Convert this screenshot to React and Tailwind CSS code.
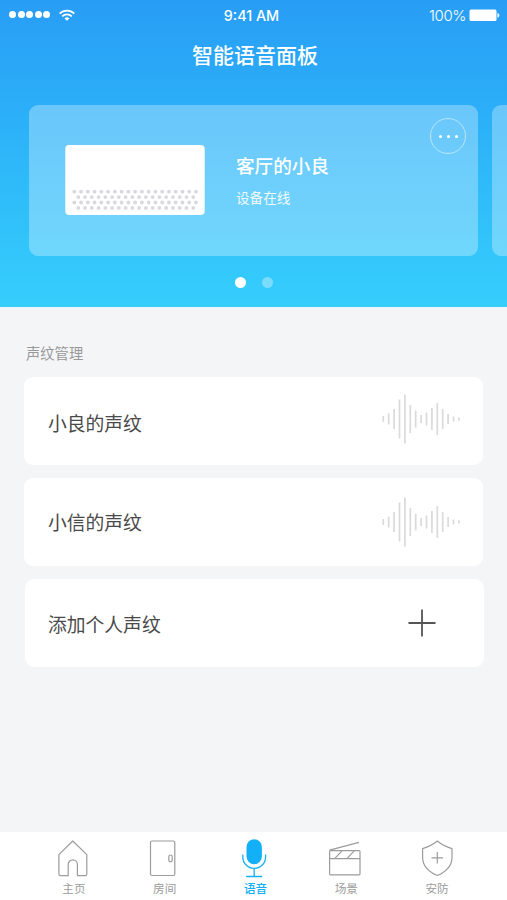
const voiceprints = [
  { name: "小良的声纹", textPad: "pt-[5px]", wavePad: "pb-[4px]" },
  { name: "小信的声纹", textPad: "pt-0", wavePad: "pb-px" },
];

// bar heights of the sound wave, left to right
const bars = [6, 11, 20, 39, 49, 28, 17, 8, 13, 22, 32, 20, 10, 5, 3];

const tabs = [
  { label: "主页", icon: HomeIcon },
  { label: "房间", icon: DoorIcon },
  { label: "语音", icon: MicIcon, active: true },
  { label: "场景", icon: SceneIcon },
  { label: "安防", icon: ShieldIcon },
];

function HomeIcon() {
  return (
    <svg width="36" height="40" viewBox="0 0 36 40" fill="none" stroke="currentColor" strokeWidth="1.2" strokeLinejoin="round">
      <path d="M17.8 3L3.9 16.6v19.6c0 .9.5 1.4 1.4 1.4h7.9V26.5a4.6 4.6 0 0 1 9.2 0v11.1h8c.9 0 1.4-.5 1.4-1.4V16.6z" />
    </svg>
  );
}

function DoorIcon() {
  return (
    <svg width="36" height="40" viewBox="0 0 36 40" fill="none" stroke="currentColor" strokeWidth="1.2">
      <rect x="4.5" y="3" width="24.3" height="34.5" rx="1.5" />
      <rect x="22.8" y="17" width="3.4" height="6.8" rx="1.7" />
    </svg>
  );
}

function MicIcon() {
  return (
    <svg width="36" height="40" viewBox="0 0 36 40" fill="none" stroke="currentColor" strokeWidth="1.3">
      <rect x="9.5" y="1.3" width="15.4" height="25" rx="7.7" fill="currentColor" stroke="none" />
      <path d="M5.8 16.5v2.5a11.4 11.4 0 0 0 22.8 0v-2.5M17.2 30.5v7.8M9.2 38.5h16" />
    </svg>
  );
}

function SceneIcon() {
  return (
    <svg width="36" height="40" viewBox="0 0 36 40" fill="none" stroke="currentColor" strokeWidth="1.2" strokeLinejoin="round">
      <rect x="1.6" y="12.6" width="30.4" height="24.2" rx="1" />
      <path d="M1.6 20.7H32M1.6 12.2L31 4.4M6.6 20.6l7.4-7.8M18.8 20.6l7.4-7.8" />
    </svg>
  );
}

function ShieldIcon() {
  return (
    <svg width="36" height="40" viewBox="0 0 36 40" fill="none" stroke="currentColor" strokeWidth="1.2" strokeLinejoin="round">
      <path d="M18.3 3C14 6.6 9 9 3.6 10.6v8.8c0 8 6.4 14.4 14.7 18.1C26.600 33.800 33 27.400 33 19.400v-8.800C27.600 9 22.600 6.600 18.300 3z" />
      <path d="M18.300 14v11.600M12.500 19.800h11.600" />
    </svg>
  );
}

function Wave() {
  return (
    <svg width="80" height="50" viewBox="0 0 80 50" stroke="#dadada" strokeWidth="1.7">
      {bars.map((h, i) => (
        <path key={i} d={`M${2.3 + i * 5.4} ${25 - h / 2}v${h}`} />
      ))}
    </svg>
  );
}

function Speaker() {
  return (
    <svg width="140" height="70" viewBox="0 0 140 70">
      <rect x="0.3" width="139.4" height="70" rx="4" fill="#fff" />
      {[0, 1, 2, 3].map((row) =>
        Array.from({ length: row % 2 ? 18 : 19 }, (_, i) => (
          <circle
            key={`${row}-${i}`}
            cx={9.3 + (row % 2 ? 4 : 0) + i * 6.76}
            cy={46.7 + row * 5.4}
            r="1.9"
            fill="#d9d8e0"
          />
        ))
      )}
    </svg>
  );
}

function StatusBar() {
  return (
    <div className="grid grid-cols-3 h-8 px-2 font-['Inter','Liberation_Sans',sans-serif] text-[15px]">
      <div className="flex items-center gap-[9px] pb-[3px] pl-px">
        <div className="flex gap-[1.5px]">
          {[0, 1, 2, 3, 4].map((i) => (
            <span key={i} className="size-[7.1px] rounded-full bg-white" />
          ))}
        </div>
        <svg width="16" height="12" viewBox="0 0 16 12" fill="none" stroke="#fff" strokeWidth="1.7">
          <path d="M.7 4.6a10.4 10.4 0 0 1 14.6 0M3.2 7.4a6.8 6.8 0 0 1 9.6 0" />
          <path d="M8 11.8L5.5 9.4a3.6 3.6 0 0 1 5 0z" fill="#fff" stroke="none" />
        </svg>
      </div>
      <div className="flex items-center justify-center pr-1 font-medium text-[14.3px]">9:41 AM</div>
      <div className="flex items-center justify-end gap-[3px] -mr-px">
        <span className="font-light tracking-tight">100%</span>
        <svg width="31" height="14" viewBox="0 0 31 14" fill="#fff" className="mb-[3px]">
          <rect x="0.5" y="1.5" width="27" height="11.5" rx="1.5" />
          <path d="M28.500 5a2.500 2.500 0 0 1 0 4.800z" />
        </svg>
      </div>
    </div>
  );
}

export default function App() {
  return (
    <div className="flex flex-col w-[507px] h-[900px] overflow-hidden bg-[#f3f5f7] font-['Noto_Sans_CJK_SC',sans-serif]">
      <header className="h-[307px] shrink-0 text-white bg-linear-to-b from-[#289df5] to-[#36cefc]">
        <StatusBar />
        <h1 className="h-[73px] pt-[7px] pl-[3px] text-center text-[21px] leading-[30px] font-medium">智能语音面板</h1>

        {/* Device carousel */}
        <div className="flex gap-[14px] ml-[29px] overflow-hidden">
          <div className="flex w-[449px] h-[151px] shrink-0 rounded-[9px] bg-white/30">
            <div className="pl-[36px] pt-[40px]">
              <Speaker />
            </div>
            <div className="flex-1 pl-[31px] pt-[45px]">
              <p className="text-[18.6px] leading-[30px] font-medium">客厅的小良</p>
              <p className="mt-[6px] text-[13.6px] leading-[22px] opacity-90">设备在线</p>
            </div>
            <button className="flex items-center justify-center gap-[5px] size-9 mt-[13px] mr-3 rounded-full border border-white/50">
              <span className="size-[3px] rounded-full bg-white" />
              <span className="size-[3px] rounded-full bg-white" />
              <span className="size-[3px] rounded-full bg-white" />
            </button>
          </div>
          <div className="w-[449px] h-[151px] shrink-0 rounded-[9px] bg-white/30" />
        </div>

        <div className="flex justify-center gap-4 pt-[21px] pl-px">
          <span className="size-[11px] rounded-full bg-white" />
          <span className="size-[11px] rounded-full bg-white/35" />
        </div>
      </header>

      {/* Voiceprints */}
      <main className="flex-1 px-6 pt-[35px] text-[#4a4a4a]">
        <h2 className="pl-[2px] h-[35px] text-[14.3px] leading-[22px] text-[#999]">声纹管理</h2>
        <div className="flex flex-col gap-[13px]">
          {voiceprints.map((v) => (
            <div key={v.name} className="flex items-center justify-between w-[459px] h-[88px] pl-6 pr-[22px] rounded-[9px] bg-white">
              <span className={`text-[18.8px] ${v.textPad}`}>{v.name}</span>
              <span className={v.wavePad}>
                <Wave />
              </span>
            </div>
          ))}
          <div className="flex items-center justify-between w-[459px] h-[88px] ml-px pl-[23px] pr-[48px] -mt-[0.5px] rounded-[9px] bg-white">
            <span className="text-[18.8px] pt-[4px]">添加个人声纹</span>
            <svg width="28" height="28" viewBox="0 0 28 28" stroke="#555" strokeWidth="1.8">
              <path d="M14 .5v27M.5 14h27" />
            </svg>
          </div>
        </div>
      </main>

      <nav className="flex h-[68px] shrink-0 pl-[28px] pr-[25px] pt-[6px] bg-white">
        {tabs.map(({ label, icon: Icon, active }) => (
          <div
            key={label}
            className={`flex flex-col items-center flex-1 text-[11.6px] leading-4 ${active ? "text-[#14b0f7] font-medium" : "text-[#9c9c9c]"}`}
          >
            <Icon />
            <span className="mt-[2px] pl-px">{label}</span>
          </div>
        ))}
      </nav>
    </div>
  );
}
